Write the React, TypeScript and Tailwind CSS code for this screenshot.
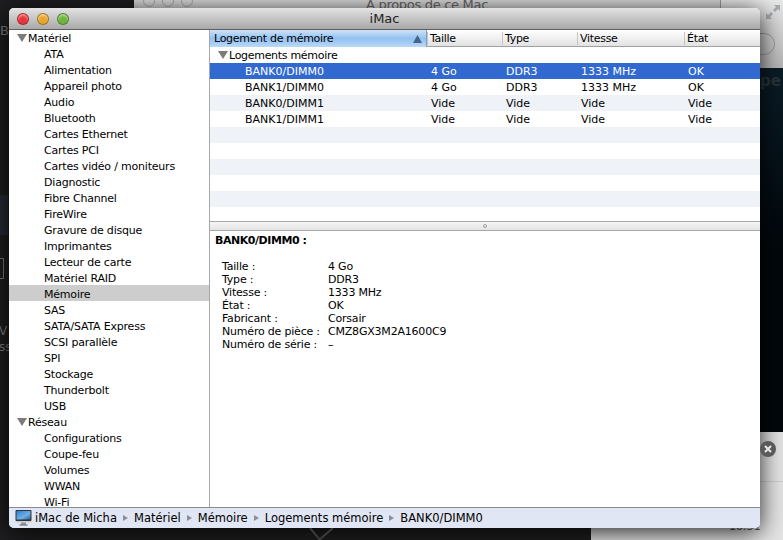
import React from 'react';

const hardware = ['ATA', 'Alimentation', 'Appareil photo', 'Audio', 'Bluetooth', 'Cartes Ethernet', 'Cartes PCI', 'Cartes vidéo / moniteurs', 'Diagnostic', 'Fibre Channel', 'FireWire', 'Gravure de disque', 'Imprimantes', 'Lecteur de carte', 'Matériel RAID', 'Mémoire', 'SAS', 'SATA/SATA Express', 'SCSI parallèle', 'SPI', 'Stockage', 'Thunderbolt', 'USB'];
const network = ['Configurations', 'Coupe-feu', 'Volumes', 'WWAN', 'Wi-Fi'];

const slots = [
  ['BANK0/DIMM0', '4 Go', 'DDR3', '1333 MHz', 'OK'],
  ['BANK1/DIMM0', '4 Go', 'DDR3', '1333 MHz', 'OK'],
  ['BANK0/DIMM1', 'Vide', 'Vide', 'Vide', 'Vide'],
  ['BANK1/DIMM1', 'Vide', 'Vide', 'Vide', 'Vide'],
];

const details = [
  ['Taille :', '4 Go'],
  ['Type :', 'DDR3'],
  ['Vitesse :', '1333 MHz'],
  ['État :', 'OK'],
  ['Fabricant :', 'Corsair'],
  ['Numéro de pièce :', 'CMZ8GX3M2A1600C9'],
  ['Numéro de série :', '–'],
];

const crumbs = ['Matériel', 'Mémoire', 'Logements mémoire', 'BANK0/DIMM0'];

function Disclosure() {
  return (
    <svg width="10" height="8" viewBox="0 0 10 8" className="shrink-0 -mt-[3px]">
      <path d="M0 0h10L5 8z" fill="#7b7b7b" />
    </svg>
  );
}

function SidebarGroup({ title, items }: { title: string; items: string[] }) {
  return (
    <>
      <div className="h-4 shrink-0 flex items-center gap-px pl-[8px] pt-[4px]">
        <Disclosure />
        <span>{title}</span>
      </div>
      {items.map((item) => (
        <div key={item} className={`h-4 shrink-0 flex items-center pl-[35px] pt-[4px] ${item === 'Mémoire' ? 'bg-[#cdcdcd]' : ''}`}>
          {item}
        </div>
      ))}
    </>
  );
}

function HeaderCell({ label }: { label: string }) {
  return (
    <div className="flex items-center">
      <span className="border-l border-[#c4c4c4] h-[13px] mr-[2px] -mt-px" />
      {label}
    </div>
  );
}

function ImacIcon() {
  return (
    <svg width="17" height="16" viewBox="0 0 17 16" className="shrink-0">
      <defs>
        <linearGradient id="screen" x1="0" y1="0" x2="1" y2="1">
          <stop offset="0" stopColor="#2f7fd0" />
          <stop offset="0.6" stopColor="#6fb0e6" />
          <stop offset="1" stopColor="#27598f" />
        </linearGradient>
      </defs>
      <rect x="0.5" y="0" width="16" height="11" rx="1" fill="#30343a" />
      <rect x="1.5" y="1" width="14" height="8.5" fill="url(#screen)" />
      <rect x="0.5" y="11" width="16" height="1.5" fill="#c9cbcd" />
      <rect x="6" y="12.5" width="5" height="2" fill="#8d9093" />
      <rect x="4.5" y="14.5" width="8" height="1" fill="#55585b" />
    </svg>
  );
}

function Light({ className }: { className: string }) {
  return <div className={`w-3 h-3 rounded-full border border-black/30 shadow-[inset_0_2px_2px_rgba(255,255,255,0.45)] ${className}`} />;
}

export default function App() {
  return (
    <div className="relative w-[783px] h-[540px] overflow-hidden bg-[#1e1e20] font-['DejaVu_Sans',sans-serif] text-[11px] leading-4 text-black">
      {/* what is behind the front window */}
      <div className="absolute left-0 top-[23px] text-[#7d7d7d] text-[13px]">B</div>
      <div className="absolute left-0 top-[195px] w-[8px] h-[40px] bg-[#262a33]" />
      <div className="absolute -left-px top-[258px] w-[5px] h-[21px] border border-[#777]" />
      <div className="absolute -left-[1px] top-[323px] text-[#7d7d7d] text-[12px]">V</div>
      <div className="absolute -left-[1px] top-[339px] text-[#7d7d7d] text-[12px]">ss</div>

      <div className="absolute left-[134px] top-[-14px] w-[586px] h-[22px] overflow-hidden bg-gradient-to-b from-[#e8e8e8] to-[#d2d2d2]">
        <div className="absolute left-[9px] bottom-[1px] flex gap-[7px]">
          <div className="w-3 h-3 rounded-full border border-[#a9a9a9]" />
          <div className="w-3 h-3 rounded-full border border-[#a9a9a9]" />
          <div className="w-3 h-3 rounded-full border border-[#a9a9a9]" />
        </div>
        <span className="absolute left-[232px] top-[11px] text-[13px] tracking-[-0.3px] text-[#666]">À propos de ce Mac</span>
      </div>

      <div className="absolute left-[720px] top-0 w-[63px] h-[68px] bg-gradient-to-b from-[#e9e9e9] to-[#b5b5b5] border-l border-[#9a9a9a]">
        <div className="absolute left-[20px] top-[33px] w-[34px] h-[22px] rounded-full border border-[#999]" />
        <svg width="16" height="16" viewBox="0 0 16 16" className="absolute left-[44px] top-[4px]">
          <path d="M1 15V9l2 2 3-3 2 2-3 3 2 2zM15 1v6l-2-2-3 3-2-2 3-3-2-2z" fill="#a2abb0" />
        </svg>
      </div>
      <div className="absolute left-[720px] top-[68px] w-[63px] h-[364px] bg-gradient-to-b from-[#0b1c27] via-[#02070b] to-[#02070b]">
        <span className="absolute left-[40px] top-[5px] text-[15px] font-bold text-[#27333a]">pe</span>
      </div>
      <div className="absolute left-[591px] top-[432px] w-[192px] h-[108px] bg-[#e4e4e4]">
        <div className="absolute left-0 top-[49px] w-full border-t border-[#cfcfcf]" />
        <span className="absolute left-[138px] top-[87px] text-[#555]">10:51</span>
      </div>
      <div className="absolute left-[760px] top-[441px] w-4 h-4 rounded-full bg-[#5a5a5a] flex items-center justify-center z-10">
        <svg width="8" height="8" viewBox="0 0 8 8">
          <path d="M1 1l6 6M7 1L1 7" stroke="#e8e8e8" strokeWidth="2" />
        </svg>
      </div>
      <svg width="60" height="12" viewBox="0 0 60 12" className="absolute left-[295px] top-[528px] z-10">
        <path d="M15 0l10 12M38 0L24 12" stroke="#3a3a3a" strokeWidth="2" fill="none" />
      </svg>

      {/* front window */}
      <div className="absolute left-[9px] top-[8px] w-[751px] h-[520px] flex flex-col rounded-[5px] overflow-hidden bg-white shadow-[0_4px_24px_rgba(0,0,0,0.85)]">
        <div className="relative h-[22px] shrink-0 flex items-center justify-center bg-gradient-to-b from-[#e3e3e3] to-[#a9a9a9] border-b border-[#606060]">
          <div className="absolute left-[8px] top-[5px] flex gap-[8px]">
            <Light className="bg-[#e8353b]" />
            <Light className="bg-[#e8a52e]" />
            <Light className="bg-[#6fb53c]" />
          </div>
          <span className="text-[13px] text-[#222]">iMac</span>
        </div>

        <div className="flex-1 min-h-0 flex">
          <div className="w-[201px] shrink-0 flex flex-col overflow-hidden border-r border-[#a8a8a8] -mt-px tracking-[-0.2px]">
            <SidebarGroup title="Matériel" items={hardware} />
            <SidebarGroup title="Réseau" items={network} />
          </div>

          <div className="flex-1 min-w-0 flex flex-col">
            <div className="h-[17px] shrink-0 grid grid-cols-[217px_75px_75px_107px_1fr] pt-px bg-gradient-to-b from-white to-[#e2e2e2] border-b border-[#a0a0a0] tracking-[-0.3px]">
              <div className="flex items-center justify-between -mt-px pt-px pl-[4px] pr-[4px] bg-gradient-to-b from-[#cfe3f8] via-[#93c1f1] to-[#b9d8f7] border-r border-[#7f9fc4]">
                Logement de mémoire
                <svg width="9" height="8" viewBox="0 0 9 8" className="-mt-px">
                  <path d="M4.5 0L9 8H0z" fill="#47648a" />
                </svg>
              </div>
              <HeaderCell label="Taille" />
              <HeaderCell label="Type" />
              <HeaderCell label="Vitesse" />
              <HeaderCell label="État" />
            </div>

            <div className="h-[174px] shrink-0 flex flex-col overflow-hidden">
              <div className="h-4 shrink-0 flex items-center gap-px pl-[8px] pt-[2px] tracking-[-0.3px]">
                <Disclosure />
                <span>Logements mémoire</span>
              </div>
              {slots.map((row, i) => (
                <div
                  key={row[0]}
                  className={`h-4 shrink-0 grid grid-cols-[218px_75px_75px_106px_1fr] items-center pt-px ${i === 0 ? 'bg-[#3169d0] text-white' : i === 2 ? 'bg-[#eff3f8]' : ''}`}
                >
                  <div className="pl-[35px]">{row[0]}</div>
                  <div className="pl-[3px]">{row[1]}</div>
                  <div className="pl-[3px]">{row[2]}</div>
                  <div className="pl-[3px]">{row[3]}</div>
                  <div className="pl-[4px]">{row[4]}</div>
                </div>
              ))}
              <div className="h-4 shrink-0 bg-[#eff3f8]" />
              <div className="h-4 shrink-0" />
              <div className="h-4 shrink-0 bg-[#eff3f8]" />
              <div className="h-4 shrink-0" />
              <div className="h-4 shrink-0 bg-[#eff3f8]" />
            </div>

            <div className="h-[10px] shrink-0 flex items-center justify-center bg-gradient-to-b from-[#f6f6f6] to-[#e4e4e4] border-y border-[#a8a8a8]">
              <div className="w-1 h-1 rounded-full border border-[#a0a0a0]" />
            </div>

            <div className="flex-1 min-h-0 pl-[5px] pt-[3px]">
              <div className="font-bold h-[13px] leading-[13px] tracking-[-0.45px]">BANK0/DIMM0 :</div>
              <div className="grid grid-cols-[106px_1fr] pl-[7px] pt-[13px] leading-[13px] tracking-[-0.2px]">
                {details.map(([label, value]) => (
                  <React.Fragment key={label}>
                    <div>{label}</div>
                    <div>{value}</div>
                  </React.Fragment>
                ))}
              </div>
            </div>
          </div>
        </div>

        <div className="h-[21px] shrink-0 flex items-center pl-[6px] text-[11.5px] bg-[#e0e6f3] border-t border-[#8a8a8a]">
          <ImacIcon />
          <span className="ml-[3px]">iMac de Micha</span>
          {crumbs.map((crumb) => (
            <React.Fragment key={crumb}>
              <svg width="5" height="6" viewBox="0 0 5 6" className="mx-[6px] shrink-0">
                <path d="M0 0l5 3-5 3z" fill="#8b8f96" />
              </svg>
              <span>{crumb}</span>
            </React.Fragment>
          ))}
        </div>
      </div>
    </div>
  );
}
